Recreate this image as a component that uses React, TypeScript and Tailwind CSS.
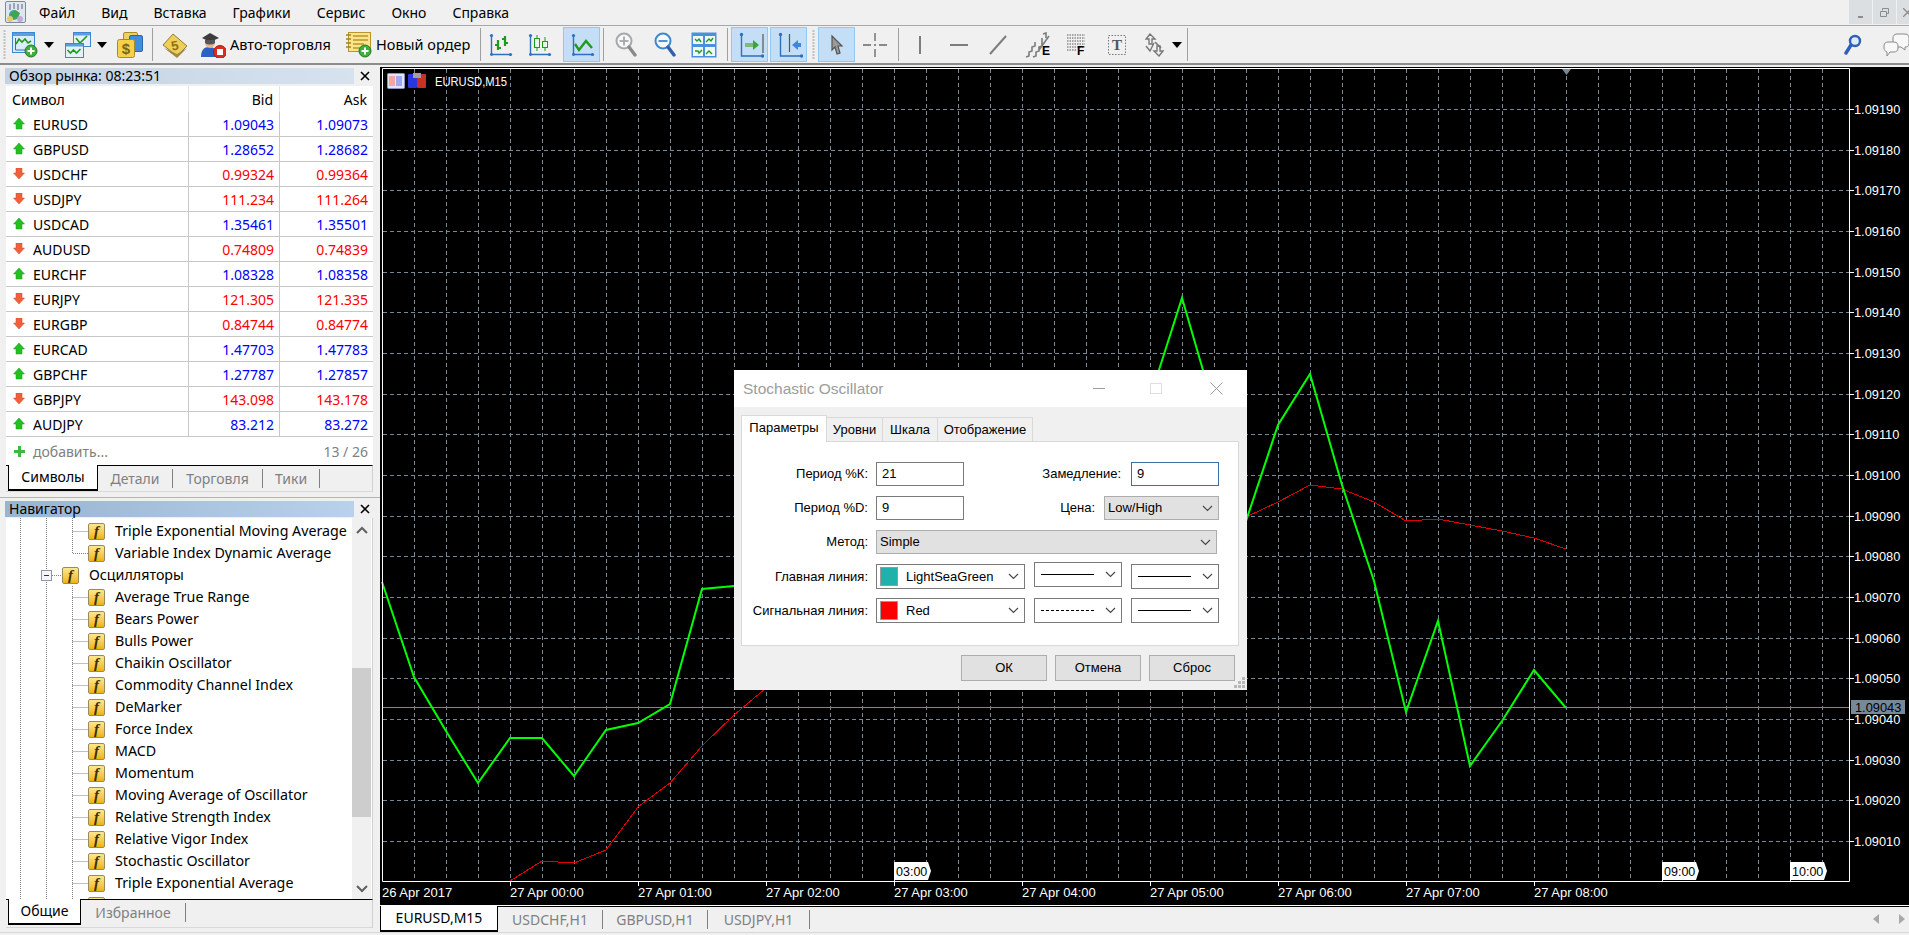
import React from "react";

const BLUE = "#2f6fc0";
const GREEN = "#1f9a1f";
const GRAY = "#7d7d7d";

const Axes = () => (
  <g stroke={BLUE} fill={BLUE}>
    <path d="M4.5 3V22.5H24" fill="none" strokeWidth="1.4" />
    <circle cx="4.5" cy="3.5" r="1.6" stroke="none" />
    <circle cx="23.5" cy="22.5" r="1.6" stroke="none" />
    <circle cx="4.5" cy="22.5" r="1.4" stroke="none" />
  </g>
);
const Svg = ({ w = 26, h = 26, children }: { w?: number; h?: number; children: React.ReactNode }) => (
  <svg width={w} height={h} viewBox={`0 0 ${w} ${h}`} className="block shrink-0">
    {children}
  </svg>
);
const PlusBadge = ({ cx, cy }: { cx: number; cy: number }) => (
  <g>
    <circle cx={cx} cy={cy} r="6" fill="#3fae3f" stroke="#1d7d1d" strokeWidth="1" />
    <path d={`M${cx} ${cy - 3.5}V${cy + 3.5}M${cx - 3.5} ${cy}H${cx + 3.5}`} stroke="#fff" strokeWidth="2" />
  </g>
);
const NewChartIcon = () => (
  <Svg>
    <rect x="0.5" y="0.5" width="22" height="20" fill="#dcecfa" stroke="#3f86d0" />
    <rect x="1" y="1" width="21" height="3" fill="#5b9fe0" />
    <path d="M3.5 6V18H20" fill="none" stroke={BLUE} />
    <path d="M4 12l3-5 3 3 3-3 3 4 3-2" fill="none" stroke={GREEN} strokeWidth="1.6" />
    <PlusBadge cx={19} cy={19} />
  </Svg>
);
const ProfilesIcon = () => (
  <Svg>
    <rect x="8.5" y="0.5" width="17" height="14" fill="#e4f0fb" stroke="#3f86d0" />
    <rect x="9" y="1" width="16" height="2.5" fill="#5b9fe0" />
    <path d="M11 6l4 5 7-7" fill="none" stroke={GREEN} strokeWidth="1.6" />
    <rect x="0.5" y="11.5" width="18" height="14" fill="#e4f0fb" stroke="#3f86d0" />
    <rect x="1" y="12" width="17" height="2.5" fill="#5b9fe0" />
    <path d="M2.5 18l3 3 3-3 3 3 4-4" fill="none" stroke={GREEN} strokeWidth="1.6" />
  </Svg>
);
const CoinsIcon = () => (
  <Svg>
    <rect x="6.5" y="0.5" width="14" height="16" rx="1.5" fill="#f2d060" stroke="#a88a2a" />
    <rect x="12.5" y="3.5" width="13" height="16" rx="1.5" fill="#3f8fe0" stroke="#2a66a8" />
    <rect x="0.5" y="7.5" width="17" height="18" rx="2" fill="#f6d14a" stroke="#a88a2a" />
    <text x="9" y="22" textAnchor="middle" fontSize="15" fontWeight="700" fill="#7d6414" fontFamily="Liberation Sans, sans-serif">$</text>
  </Svg>
);
const BookIcon = () => (
  <Svg>
    <path d="M1 13L11 2l14 12-10 10z" fill="#f0cf58" stroke="#8f7a35" />
    <path d="M2 16l13 10 10-10-10 6z" fill="#a08a4a" />
    <text x="13" y="18" textAnchor="middle" fontSize="13" fontWeight="700" fill="#8f6f10" fontFamily="Liberation Sans, sans-serif" transform="rotate(-12 13 14)">5</text>
  </Svg>
);
const HatIcon = () => (
  <Svg>
    <path d="M1 25c0-7 3-10 8-10s9 3 9 10z" fill="#2a62c4" />
    <circle cx="10" cy="11" r="5" fill="#e8b88a" />
    <path d="M2 6l8-5 9 5-9 4z" fill="#3c3c3c" />
    <path d="M5 8v3c3 2 7 2 10 0V8z" fill="#555" />
    <circle cx="20" cy="20" r="6.5" fill="#e02c20" stroke="#a81c12" />
    <rect x="17" y="17" width="6" height="6" fill="#fff" />
  </Svg>
);
const OrderIcon = () => (
  <Svg>
    <rect x="2.5" y="0.5" width="22" height="19" fill="#fbe38a" stroke="#b8962e" />
    <path d="M0 3h5M0 7h5M0 11h5M0 15h5" stroke="#9a8230" strokeWidth="1.4" />
    <path d="M7 4h15M7 8h15M7 12h11M7 16h8" stroke="#b8962e" strokeWidth="1.4" />
    <PlusBadge cx={19} cy={19} />
  </Svg>
);
const BarsIcon = () => (
  <Svg>
    <Axes />
    <path d="M11 8v10M8 13h3M11 16h3M18 4v10M15 7h3M18 11h3" fill="none" stroke={GREEN} strokeWidth="2.2" />
  </Svg>
);
const CandlesIcon = () => (
  <Svg>
    <Axes />
    <path d="M11 3v16M19 5v14" stroke={GREEN} strokeWidth="1" />
    <rect x="8.5" y="6.5" width="5" height="9" fill="#eafbe8" stroke={GREEN} />
    <rect x="16.5" y="9.5" width="5" height="6" fill="#eafbe8" stroke={GREEN} />
  </Svg>
);
const LineIcon = () => (
  <Svg>
    <Axes />
    <path d="M6 12l4 6 7-9 6 7" fill="none" stroke={GREEN} strokeWidth="2.4" />
  </Svg>
);
const Magnifier = ({ c, rim, plus }: { c: string; rim: string; plus?: boolean }) => (
  <Svg w={22} h={26}>
    <circle cx="9" cy="9" r="7.5" fill="#f4f8fc" stroke={rim} strokeWidth="2" />
    <path d="M4.5 9h9" stroke={rim} strokeWidth="1.8" />
    {plus && <path d="M9 4.5v9" stroke={rim} strokeWidth="1.8" />}
    <path d="M14 15l6 8" stroke={c} strokeWidth="3.4" strokeLinecap="round" />
  </Svg>
);
const TileIcon = () => (
  <Svg>
    <rect x="0.5" y="0.5" width="25" height="25" fill="#4a90dc" />
    <path d="M2 4h10v8H2zM14 4h10v8H14zM2 15h10v9H2zM14 15h10v9H14z" fill="#f0f7fc" />
    <path d="M4 7l2 2 2-2 2 3M15 10l3-3 2 2 2-3M4 19h3l1 2 3-3M15 22l3-3 3 3" fill="none" stroke={GREEN} strokeWidth="1.4" />
  </Svg>
);
const ShiftIcon = () => (
  <Svg w={28} h={28}>
    <path d="M5.5 3V25H27" fill="none" stroke={BLUE} strokeWidth="1.4" />
    <circle cx="5.5" cy="3.5" r="1.7" fill={BLUE} />
    <circle cx="26.5" cy="25" r="1.7" fill={BLUE} />
    <path d="M27 3v19" stroke="#555" strokeWidth="1.2" />
    <rect x="9" y="12" width="8" height="4" fill="#7dbb7d" />
    <path d="M17 9l6 5-6 5z" fill="#3aa63a" />
  </Svg>
);
const AutoIcon = () => (
  <Svg w={28} h={28}>
    <path d="M5.5 3V25H27" fill="none" stroke={BLUE} strokeWidth="1.4" />
    <circle cx="5.5" cy="3.5" r="1.7" fill={BLUE} />
    <circle cx="26.5" cy="25" r="1.7" fill={BLUE} />
    <path d="M14.5 3v18" stroke="#555" strokeWidth="1.2" />
    <path d="M17 14l6-5v3h3v4h-3v3z" fill="#3f86e0" />
  </Svg>
);
const CursorIcon = () => (
  <Svg w={14} h={22}>
    <path d="M2 2l10 10H8l2 7-3 1-2-7-3 3z" fill="#9a9a9a" stroke="#555" strokeWidth="1.2" />
  </Svg>
);
const CrossIcon = () => (
  <Svg>
    <path d="M13 1v8M13 17v8M1 13h8M17 13h8" stroke="#8a8a8a" strokeWidth="1.8" />
    <rect x="12" y="12" width="2" height="2" fill="#8a8a8a" />
  </Svg>
);
const GLine = ({ d, w = 20, h = 20 }: { d: string; w?: number; h?: number }) => (
  <Svg w={w} h={h}>
    <path d={d} stroke={GRAY} strokeWidth="2" fill="none" />
  </Svg>
);
const ChannelsIcon = () => (
  <Svg w={26} h={26}>
    <path d="M1 25l3-1v-4l3-1v-4l3-1v-4M8 25l3-1v-4l3-1v-4l3-1V6M14 18L24 4M18 2l3-1v5" fill="none" stroke={GRAY} strokeWidth="1.6" />
    <text x="17" y="23" fontSize="12" fontWeight="700" fill="#000" fontFamily="Liberation Sans, sans-serif">E</text>
  </Svg>
);
const FiboIcon = () => (
  <Svg w={20} h={26}>
    <path d="M1 3h18M1 6h18M1 9h18M1 12h18M1 15h18M1 18h10" stroke="#8a8a8a" strokeWidth="1.6" strokeDasharray="1.5 1" />
    <text x="11" y="23" fontSize="12" fontWeight="700" fill="#000" fontFamily="Liberation Sans, sans-serif">F</text>
  </Svg>
);
const TextIcon = () => (
  <Svg w={20} h={22}>
    <rect x="1.5" y="1.5" width="17" height="19" fill="none" stroke="#777" strokeDasharray="1.5 1.5" />
    <text x="10" y="16" textAnchor="middle" fontSize="15" fontWeight="700" fill="#555" fontFamily="Liberation Serif, serif">T</text>
  </Svg>
);
const ArrowsIcon = () => (
  <Svg w={20} h={24}>
    <path d="M5 1L1 6h3v5h3V6h3zM1 13l4 5 4-8M14 23l4-5h-3v-5h-3v5H9z" fill="none" stroke="#777" strokeWidth="1.4" />
    <path d="M10 9l6 6" stroke="#777" strokeWidth="1.6" />
  </Svg>
);
const Tri = ({ w = 10 }: { w?: number }) => (
  <svg width={w} height="6" viewBox="0 0 10 6" className="block shrink-0">
    <path d="M0 0h10L5 6z" fill="#000" />
  </svg>
);
const AppIcon = () => (
  <svg width="21" height="23" viewBox="0 0 21 23" className="block">
    <rect x="0.5" y="0.5" width="20" height="21" rx="1.5" fill="#dfe6ee" stroke="#7a8aa0" />
    <path d="M5 3v6M9 2v6M13 3v6M17 3v5" stroke="#9aa6b4" strokeWidth="2" />
    <circle cx="9" cy="14" r="5" fill="#3f9ed0" />
    <path d="M5 13l5-4 5 3-2 5-6 1z" fill="#3fa64a" />
    <circle cx="5" cy="18" r="3" fill="#e8c86a" />
    <circle cx="15" cy="18" r="3" fill="#c9a6d8" />
  </svg>
);
const Grip = () => (
  <svg width="3" height="30" viewBox="0 0 3 30" className="block shrink-0">
    {Array.from({ length: 10 }, (_, i) => (
      <rect key={i} x="0.5" y={i * 3} width="2" height="2" fill="#c0c0c0" />
    ))}
  </svg>
);
const Sep = ({ c }: { c: string }) => <div className={`h-[33px] w-px shrink-0 bg-[#a0a0a0] ${c}`} />;
const Active = ({ c, children }: { c: string; children: React.ReactNode }) => (
  <div className={`flex h-[35px] w-[37px] shrink-0 items-center justify-center border border-[#90c8f6] bg-[#c4dff5] ${c}`}>
    {children}
  </div>
);

const Toolbar = () => (
  <div className="flex h-[39px] shrink-0 items-center border-b-2 border-[#8c8c8c] text-[14.5px] text-black">
    <div className="ml-[3px]"><Grip /></div>
    <div className="ml-[6px]"><NewChartIcon /></div>
    <div className="ml-[6px]"><Tri /></div>
    <div className="ml-[11px]"><ProfilesIcon /></div>
    <div className="ml-[6px]"><Tri /></div>
    <div className="ml-[10px]"><CoinsIcon /></div>
    <Sep c="ml-[9px]" />
    <div className="ml-[9px]"><BookIcon /></div>
    <div className="ml-[12px]"><HatIcon /></div>
    <span className="ml-[4px] w-[102px] shrink-0 whitespace-nowrap">Авто-торговля</span>
    <div className="ml-[14px]"><OrderIcon /></div>
    <span className="ml-[4px] w-[94px] shrink-0 whitespace-nowrap">Новый ордер</span>
    <Sep c="ml-[10px]" />
    <div className="ml-[6px]"><BarsIcon /></div>
    <div className="ml-[13px]"><CandlesIcon /></div>
    <Active c="ml-[11px]"><LineIcon /></Active>
    <Sep c="ml-[3px]" />
    <div className="ml-[11px]"><Magnifier c="#8a8a8a" rim="#a8a8a8" plus /></div>
    <div className="ml-[17px]"><Magnifier c="#2f5fb0" rim="#3f86d0" /></div>
    <div className="ml-[15px]"><TileIcon /></div>
    <Sep c="ml-[10px]" />
    <Active c="ml-[3px]"><ShiftIcon /></Active>
    <Active c="ml-[2px]"><AutoIcon /></Active>
    <div className="ml-[5px]"><Grip /></div>
    <Active c="ml-[3px]"><CursorIcon /></Active>
    <div className="ml-[7px]"><CrossIcon /></div>
    <Sep c="ml-[10px]" />
    <div className="ml-[11px]"><GLine d="M10 1v18" /></div>
    <div className="ml-[19px]"><GLine d="M1 10h18" /></div>
    <div className="ml-[19px]"><GLine d="M2 19L18 1" /></div>
    <div className="ml-[17px]"><ChannelsIcon /></div>
    <div className="ml-[15px]"><FiboIcon /></div>
    <div className="ml-[21px]"><TextIcon /></div>
    <div className="ml-[18px]"><ArrowsIcon /></div>
    <div className="ml-[7px]"><Tri /></div>
    <Sep c="ml-[5px]" />
    <div className="ml-auto">
      <svg width="18" height="22" viewBox="0 0 18 22" className="block">
        <circle cx="11" cy="7" r="5" fill="#dfeaf8" stroke="#2f5fb8" strokeWidth="2.4" />
        <path d="M7 11l-5 8" stroke="#2f5fb8" strokeWidth="3.4" strokeLinecap="round" />
      </svg>
    </div>
    <div className="ml-[21px]">
      <svg width="26" height="24" viewBox="0 0 26 24" className="block">
        <path d="M14 1h8c3 0 4 2 4 4v6c0 2-2 3-4 3v3l-4-3h-4c-3 0-4-2-4-4V5c0-2 1-4 4-4z" fill="#f8f8f8" stroke="#8a8a8a" />
        <path d="M5 9h6c3 0 4 2 4 4v2c0 3-2 4-4 4H7l-3 4v-4c-2-1-3-2-3-4v-2c0-3 2-4 4-4z" fill="#f8f8f8" stroke="#8a8a8a" />
      </svg>
    </div>
  </div>
);

const MENU = ["Файл", "Вид", "Вставка", "Графики", "Сервис", "Окно", "Справка"];
const MenuBar = () => (
  <div className="flex h-[26px] shrink-0 items-center border-b border-[#a8a8a8] text-[14px] text-black">
    <div className="ml-[5px] mr-[13px]"><AppIcon /></div>
    <div className="flex gap-[26px]">
      {MENU.map((m) => (
        <span key={m}>{m}</span>
      ))}
    </div>
    <div className="ml-auto flex h-[24px] self-start">
      <div className="flex w-[23px] items-end justify-center bg-[#dcdfe2] pb-[6px]"><div className="h-[2px] w-[5px] bg-[#8c8c8c]" /></div>
      <div className="ml-px flex w-[23px] items-center justify-center bg-[#dcdfe2]">
        <svg width="9" height="9" viewBox="0 0 9 9" className="block"><path d="M2.5 2.5V.5h6v5h-2M.5 3.5h6v5h-6z" fill="none" stroke="#8c8c8c" /></svg>
      </div>
      <div className="ml-px flex w-[12px] items-center justify-start overflow-hidden bg-[#dcdfe2] pl-[6px]">
        <svg width="9" height="9" viewBox="0 0 9 9" className="block shrink-0"><path d="M0 0l9 9M9 0L0 9" stroke="#8c8c8c" strokeWidth="1.3" /></svg>
      </div>
    </div>
  </div>
);

const CloseX = () => (
  <svg width="10" height="10" viewBox="0 0 10 10" className="block">
    <path d="M1 1l8 8M9 1L1 9" stroke="#000" strokeWidth="1.6" />
  </svg>
);
const PanelHeader = ({ title, gradient }: { title: string; gradient: string }) => (
  <div className="flex h-[16px] items-center">
    <div className={`ml-[5px] flex h-[16px] w-[349px] items-center pl-[4px] text-[14px] leading-none text-black ${gradient}`}>{title}</div>
    <div className="ml-[6px]"><CloseX /></div>
  </div>
);

type Row = [string, boolean, string, string];
const MARKET: Row[] = [
  ["EURUSD", true, "1.09043", "1.09073"],
  ["GBPUSD", true, "1.28652", "1.28682"],
  ["USDCHF", false, "0.99324", "0.99364"],
  ["USDJPY", false, "111.234", "111.264"],
  ["USDCAD", true, "1.35461", "1.35501"],
  ["AUDUSD", false, "0.74809", "0.74839"],
  ["EURCHF", true, "1.08328", "1.08358"],
  ["EURJPY", false, "121.305", "121.335"],
  ["EURGBP", false, "0.84744", "0.84774"],
  ["EURCAD", true, "1.47703", "1.47783"],
  ["GBPCHF", true, "1.27787", "1.27857"],
  ["GBPJPY", false, "143.098", "143.178"],
  ["AUDJPY", true, "83.212", "83.272"],
];
const Arrow = ({ up }: { up: boolean }) => (
  <svg width="12" height="12" viewBox="0 0 12 12" className="block">
    {up ? (
      <path d="M6 0l5.5 6H9v5H3V6H0.5z" fill="#22c022" stroke="#1a9a1a" strokeWidth="0.5" />
    ) : (
      <path d="M6 11L0.5 5H3V0h6v5h2.5z" fill="#f0603c" stroke="#d04a2a" strokeWidth="0.5" />
    )}
  </svg>
);
const MarketWatch = () => (
  <div className="ml-[6px] mt-[2px] w-[367px] bg-white text-[14px] text-black">
    <div className="flex h-[26px]">
      <div className="flex w-[183px] items-center border-r border-[#e4e4e4] pl-[6px]">Символ</div>
      <div className="flex w-[91px] items-center justify-end border-r border-[#e4e4e4] pr-[6px]">Bid</div>
      <div className="flex w-[93px] items-center justify-end pr-[6px]">Ask</div>
    </div>
    {MARKET.map(([s, up, b, a]) => (
      <div key={s} className={`flex h-[25px] border-b border-[#c8c8c8] ${up ? "text-[#0000ff]" : "text-[#ff0000]"}`}>
        <div className="flex w-[183px] items-center border-r border-[#c8c8c8] pl-[7px] text-black">
          <Arrow up={up} />
          <span className="ml-[8px]">{s}</span>
        </div>
        <div className="flex w-[91px] items-center justify-end border-r border-[#c8c8c8] pr-[5px]">{b}</div>
        <div className="flex w-[93px] items-center justify-end pr-[5px]">{a}</div>
      </div>
    ))}
    <div className="flex h-[28px] items-center pl-[7px] pr-[5px] text-[#808080]">
      <svg width="13" height="13" viewBox="0 0 13 13" className="block"><path d="M6.5 1v11M1 6.5h11" stroke="#3fb83f" strokeWidth="3" /></svg>
      <span className="ml-[7px]">добавить...</span>
      <span className="ml-auto">13 / 26</span>
    </div>
  </div>
);

const TabStrip = ({ active, first, rest, cls }: { active: string; first: string; rest: [string, string][]; cls: string }) => (
  <div className={`flex items-start border-t border-r border-b border-t-black border-r-[#d0d0d0] border-b-[#d8d8d8] text-[14px] leading-none ${cls}`}>
    <div className={`-mt-px flex h-[26px] items-center justify-center border-x border-b-2 border-black bg-white text-black ${first}`}>{active}</div>
    {rest.map(([t, w]) => (
      <div key={t} className={`mt-[3px] flex h-[19px] items-center justify-center border-r border-[#808080] text-[#808080] ${w}`}>{t}</div>
    ))}
  </div>
);

const FnIcon = () => (
  <div className="flex h-[17px] w-[17px] shrink-0 items-center justify-center rounded-[2px] border border-[#9a8a5a] bg-gradient-to-b from-[#ffe88a] to-[#eeb400] [font-family:'Liberation_Serif',serif] text-[15px] font-bold italic leading-none text-[#3a3000]">
    f
  </div>
);
const Guides = ({ w, mid, end, box }: { w: number; mid?: boolean; end?: boolean; box?: boolean }) => (
  <svg width={w} height="22" viewBox={`0 0 ${w} 22`} className="block shrink-0">
    <g stroke="#808080" strokeDasharray="1 1" fill="none">
      <path d="M14.5 0v22" />
      <path d="M40.5 0v22" />
      {mid && <path d={end ? "M66.5 0v11.5H82" : "M66.5 0v22M66.5 11.5H82"} />}
      {box && <path d="M46 11.5H56" />}
    </g>
    {box && (
      <g>
        <rect x="35.5" y="6.5" width="10" height="10" fill="#f4f6fa" stroke="#8c96a8" />
        <path d="M38 11.5h5" stroke="#333" />
      </g>
    )}
  </svg>
);
const TOP = ["Triple Exponential Moving Average", "Variable Index Dynamic Average"];
const OSC = [
  "Average True Range", "Bears Power", "Bulls Power", "Chaikin Oscillator", "Commodity Channel Index", "DeMarker",
  "Force Index", "MACD", "Momentum", "Moving Average of Oscillator", "Relative Strength Index", "Relative Vigor Index",
  "Stochastic Oscillator", "Triple Exponential Average",
];
const Item = ({ t, end }: { t?: string; end?: boolean }) => (
  <div className="flex h-[22px] items-center">
    <Guides w={82} mid end={end} />
    <FnIcon />
    {t && <span className="ml-[10px] whitespace-nowrap">{t}</span>}
  </div>
);
const Navigator = () => (
  <div className="ml-[6px] mt-px flex h-[381px] w-[367px] overflow-hidden border-r border-[#d0d0d0] bg-white text-[14.25px] text-black">
    <div className="w-[346px] overflow-hidden">
      <div className="-mt-[20px] h-[22px]"><Guides w={82} mid /></div>
      <Item t={TOP[0]} />
      <Item t={TOP[1]} end />
      <div className="flex h-[22px] items-center">
        <Guides w={56} box />
        <FnIcon />
        <span className="ml-[10px]">Осцилляторы</span>
      </div>
      {OSC.map((t) => (
        <Item key={t} t={t} />
      ))}
      <Item />
    </div>
    <div className="flex w-[19px] flex-col bg-[#f0f0f0]">
      <div className="flex h-[24px] items-center justify-center">
        <svg width="12" height="8" viewBox="0 0 12 8" className="block"><path d="M1 7l5-5 5 5" fill="none" stroke="#606060" strokeWidth="2" /></svg>
      </div>
      <div className="mt-[126px] h-[149px] bg-[#cdcdcd]" />
      <div className="mt-auto flex h-[21px] items-center justify-center">
        <svg width="12" height="8" viewBox="0 0 12 8" className="block"><path d="M1 1l5 5 5-5" fill="none" stroke="#606060" strokeWidth="2" /></svg>
      </div>
    </div>
  </div>
);

const GREEN_PTS = "382,582 414,677 446,731 478,783 510,738 542,738 574,776 606,730 638,723 670,704 702,589 734,586 766,590 798,560 1150,398 1182,298 1214,408 1246,521 1278,425 1310,374 1342,485 1374,581 1406,712 1438,621 1470,766 1502,721 1534,670 1566,708";
const RED_PTS = "510,881 542,861 574,863 606,850 638,807 670,783 702,746 734,715 766,688 1246,517 1278,502 1310,485 1342,489 1374,502 1406,521 1438,519 1470,525 1502,531 1534,538 1566,549";
const PRICES = Array.from({ length: 19 }, (_, i) => ({ label: (1.0919 - i * 0.0001).toFixed(5), y: Math.round(109 + i * 40.67) + 0.5 }));
const VX = Array.from({ length: 45 }, (_, i) => 414.5 + i * 32);
const DATES = [
  [638, "27 Apr 01:00"], [766, "27 Apr 02:00"], [894, "27 Apr 03:00"], [1022, "27 Apr 04:00"],
  [1150, "27 Apr 05:00"], [1278, "27 Apr 06:00"], [1406, "27 Apr 07:00"], [1534, "27 Apr 08:00"],
] as [number, string][];
const FLAGS: [number, string][] = [[894, "03:00"], [1662, "09:00"], [1790, "10:00"]];
const TXT = { fontFamily: "Liberation Sans, sans-serif", fontSize: 13 };

const Chart = () => (
  <svg width="1529" height="838" viewBox="380 67 1529 838" className="block shrink-0 bg-black" style={TXT}>
    <g stroke="#778899" strokeDasharray="4 3">
      {PRICES.map((p) => <path key={p.label} d={`M383 ${p.y}H1849`} />)}
      {VX.map((x) => <path key={x} d={`M${x} 69V881`} />)}
    </g>
    <path d="M383 707.5H1849" stroke="#778899" />
    <g shapeRendering="crispEdges" fill="none">
      <polyline points={RED_PTS} stroke="#e00000" strokeWidth="1" />
    </g>
    <polyline points={GREEN_PTS} stroke="#00ff00" strokeWidth="2" fill="none" />
    <path d="M382.5 881.5V68.5H1849.5V881.5H382.5" fill="none" stroke="#fff" />
    <path d="M1562 69h9l-4.5 6z" fill="#778899" />
    {PRICES.map((p) => (
      <g key={p.label}>
        <path d={`M1850 ${p.y}h4`} stroke="#fff" />
        <text x="1854" y={p.y + 4.5} fill="#fff" fontSize="12.8">{p.label}</text>
      </g>
    ))}
    <rect x="1851" y="700" width="54" height="14" fill="#778899" />
    <text x="1855" y="712" fill="#000" fontSize="12.8">1.09043</text>
    {[510, ...DATES.map((d) => d[0])].map((x) => <path key={x} d={`M${x + 0.5} 882v4`} stroke="#fff" />)}
    <text x="382" y="897" fill="#fff">26 Apr 2017</text>
    <text x="510" y="897" fill="#fff">27 Apr 00:00</text>
    {DATES.map(([x, t]) => <text key={t} x={x} y="897" fill="#fff">{t}</text>)}
    {FLAGS.map(([x, t]) => (
      <g key={t}>
        <path d={`M${x} 862H${x + 34}L${x + 37} 871 ${x + 34} 880H${x}z`} fill="#fff" />
        <path d={`M${x + 0.5} 862V881`} stroke="#fff" />
        <text x={x + 2} y="875.5" fill="#000" fontSize="12.5">{t}</text>
      </g>
    ))}
    <rect x="387.5" y="73.5" width="17" height="15" rx="1" fill="#dfe6f6" stroke="#8a94c0" />
    <rect x="389" y="76" width="6" height="10" fill="#f0a8a0" />
    <rect x="396" y="76" width="6" height="10" fill="#a0a8f0" />
    <rect x="408" y="74" width="9" height="14" rx="1" fill="#2838e0" />
    <rect x="417" y="74" width="9" height="14" rx="1" fill="#c83028" />
    <rect x="413" y="73" width="8" height="5" fill="#a0a0a0" />
    <text x="435" y="86" fill="#fff" fontSize="13" textLength="72" lengthAdjust="spacingAndGlyphs">EURUSD,M15</text>
  </svg>
);

const ChartTabs = () => (
  <div className="flex h-[26px] items-start border-t border-black text-[14px] leading-none">
    <div className="-mt-px flex h-[26px] w-[118px] items-center justify-center border-x border-b-2 border-black bg-white text-black">EURUSD,M15</div>
    <div className="mt-[3px] flex h-[19px] w-[105px] items-center justify-center border-r border-[#808080] text-[#808080]">USDCHF,H1</div>
    <div className="mt-[3px] flex h-[19px] w-[105px] items-center justify-center border-r border-[#808080] text-[#808080]">GBPUSD,H1</div>
    <div className="mt-[3px] flex h-[19px] w-[102px] items-center justify-center border-r border-[#808080] text-[#808080]">USDJPY,H1</div>
    <div className="ml-auto mr-[4px] mt-[7px] flex items-center gap-[20px]">
      <svg width="6" height="10" viewBox="0 0 6 10" className="block"><path d="M6 0v10L0 5z" fill="#a8a8a8" /></svg>
      <svg width="6" height="10" viewBox="0 0 6 10" className="block"><path d="M0 0v10l6-5z" fill="#a8a8a8" /></svg>
    </div>
  </div>
);

const Chev = () => (
  <svg width="11" height="7" viewBox="0 0 11 7" className="block shrink-0">
    <path d="M1 1l4.5 4.5L10 1" fill="none" stroke="#444" strokeWidth="1.1" />
  </svg>
);
const Field = ({ v, c, focus }: { v: string; c: string; focus?: boolean }) => (
  <div className={`flex h-[24px] shrink-0 items-center border bg-white pl-[5px] ${focus ? "border-[#3a70a8]" : "border-[#7a7a7a]"} ${c}`}>{v}</div>
);
const Sel = ({ v, c }: { v: string; c: string }) => (
  <div className={`flex h-[24px] shrink-0 items-center justify-between border border-[#adadad] bg-[#e1e1e1] pl-[3px] pr-[5px] ${c}`}>
    <span>{v}</span>
    <Chev />
  </div>
);
const ColorSel = ({ color, name }: { color: string; name: string }) => (
  <div className="flex h-[25px] w-[149px] shrink-0 items-center border border-[#7a7a7a] bg-white pl-[3px] pr-[5px]">
    <div className={`h-[19px] w-[18px] border border-[#9a9a9a] ${color}`} />
    <span className="ml-[8px]">{name}</span>
    <div className="ml-auto"><Chev /></div>
  </div>
);
const LineSel = ({ dash, c }: { dash?: boolean; c: string }) => (
  <div className={`flex h-[25px] w-[88px] shrink-0 items-center border border-[#7a7a7a] bg-white pl-[6px] pr-[5px] ${c}`}>
    <div className={`h-0 w-[53px] border-t border-black ${dash ? "border-dashed" : ""}`} />
    <div className="ml-auto"><Chev /></div>
  </div>
);
const Lbl = ({ t, c = "w-[126px]" }: { t: string; c?: string }) => <div className={`shrink-0 whitespace-nowrap text-right ${c}`}>{t}</div>;
const Btn = ({ t }: { t: string }) => (
  <div className="flex h-[26px] w-[86px] items-center justify-center border border-[#adadad] bg-[#e1e1e1]">{t}</div>
);
const DlgTab = ({ t, w }: { t: string; w: string }) => (
  <div className={`mt-[2px] flex h-[24px] items-center justify-center border-t border-r border-[#d9d9d9] bg-[#f0f0f0] ${w}`}>{t}</div>
);
const Dialog = () => (
  <div className="absolute left-[734px] top-[370px] flex h-[320px] w-[513px] flex-col bg-[#f0f0f0] [font-family:'Liberation_Sans',sans-serif] text-[13px] text-black">
    <div className="flex h-[37px] shrink-0 items-center bg-white pl-[9px] text-[15.5px] text-[#9c9c9c]">
      <span>Stochastic Oscillator</span>
      <div className="ml-auto flex items-center">
        <div className="mr-[45px] h-px w-[12px] bg-[#9c9c9c]" />
        <div className="mr-[48px] h-[11px] w-[12px] border border-[#e0e0e0]" />
        <svg width="13" height="13" viewBox="0 0 13 13" className="mr-[24px] block"><path d="M0.5 0.5l12 12M12.5 0.5l-12 12" stroke="#9c9c9c" /></svg>
      </div>
    </div>
    <div className="ml-[7px] mt-[8px] flex h-[26px] w-[498px]">
      <div className="z-10 flex h-[27px] w-[86px] items-center justify-center border-x border-t border-[#d9d9d9] bg-white pb-[3px]">Параметры</div>
      <DlgTab t="Уровни" w="w-[56px]" />
      <DlgTab t="Шкала" w="w-[55px]" />
      <DlgTab t="Отображение" w="w-[95px]" />
    </div>
    <div className="ml-[7px] flex h-[205px] w-[498px] flex-col border border-[#d9d9d9] bg-white pt-[20px]">
      <div className="flex items-center">
        <Lbl t="Период %К:" />
        <Field v="21" c="ml-[8px] w-[88px]" />
        <Lbl t="Замедление:" c="w-[157px]" />
        <Field v="9" focus c="ml-[10px] w-[88px]" />
      </div>
      <div className="mt-[10px] flex items-center">
        <Lbl t="Период %D:" />
        <Field v="9" c="ml-[8px] w-[88px]" />
        <Lbl t="Цена:" c="w-[131px]" />
        <Sel v="Low/High" c="ml-[9px] w-[115px]" />
      </div>
      <div className="mt-[10px] flex items-center">
        <Lbl t="Метод:" />
        <Sel v="Simple" c="ml-[8px] w-[341px]" />
      </div>
      <div className="mt-[10px] flex items-center">
        <Lbl t="Главная линия:" />
        <div className="ml-[8px]"><ColorSel color="bg-[#20b2aa]" name="LightSeaGreen" /></div>
        <LineSel c="ml-[9px] -mt-[4px]" />
        <LineSel c="ml-[9px]" />
      </div>
      <div className="mt-[9px] flex items-center">
        <Lbl t="Сигнальная линия:" />
        <div className="ml-[8px]"><ColorSel color="bg-[#ff0000]" name="Red" /></div>
        <LineSel dash c="ml-[9px]" />
        <LineSel c="ml-[9px]" />
      </div>
    </div>
    <div className="mt-[9px] flex justify-end gap-[8px] pr-[12px]">
      <Btn t="ОК" />
      <Btn t="Отмена" />
      <Btn t="Сброс" />
    </div>
    <svg width="11" height="11" viewBox="0 0 11 11" className="absolute bottom-[2px] right-[2px] block">
      <path d="M8 0h3v3H8zM4 4h3v3H4zM8 4h3v3H8zM0 8h3v3H0zM4 8h3v3H4zM8 8h3v3H8z" fill="#b8b8b8" />
    </svg>
  </div>
);

export default function App() {
  return (
    <div className="relative flex h-[935px] w-[1909px] flex-col overflow-hidden bg-[#f0f0f0] [font-family:'Noto_Sans','Liberation_Sans',sans-serif]">
      <MenuBar />
      <Toolbar />
      <div className="flex min-h-0 flex-1">
        <div className="flex w-[380px] shrink-0 flex-col pt-[3px]">
          <PanelHeader title="Обзор рынка: 08:23:51" gradient="bg-gradient-to-r from-[#c3d2e2] to-[#d6e2ee]" />
          <MarketWatch />
          <TabStrip cls="ml-[6px] h-[27px] w-[367px]" first="ml-[2px] w-[90px]" active="Символы" rest={[["Детали", "w-[75px]"], ["Торговля", "w-[90px]"], ["Тики", "w-[57px]"]]} />
          <div className="mt-[5px] h-px w-[380px] bg-[#b4b4b4]" />
          <div className="mt-[3px]">
            <PanelHeader title="Навигатор" gradient="bg-gradient-to-r from-[#99b4d1] to-[#b9d1ea]" />
          </div>
          <Navigator />
          <TabStrip cls="ml-[6px] h-[29px] w-[367px]" first="ml-[2px] w-[73px]" active="Общие" rest={[["Избранное", "w-[105px]"]]} />
        </div>
        <div className="flex min-w-0 flex-1 flex-col">
          <div className="h-[2px] bg-[#f0f0f0]" />
          <Chart />
          <div className="h-px bg-white" />
          <ChartTabs />
        </div>
      </div>
      <div className="h-[3px] shrink-0 border-t border-[#d8d8d8]" />
      <Dialog />
    </div>
  );
}
